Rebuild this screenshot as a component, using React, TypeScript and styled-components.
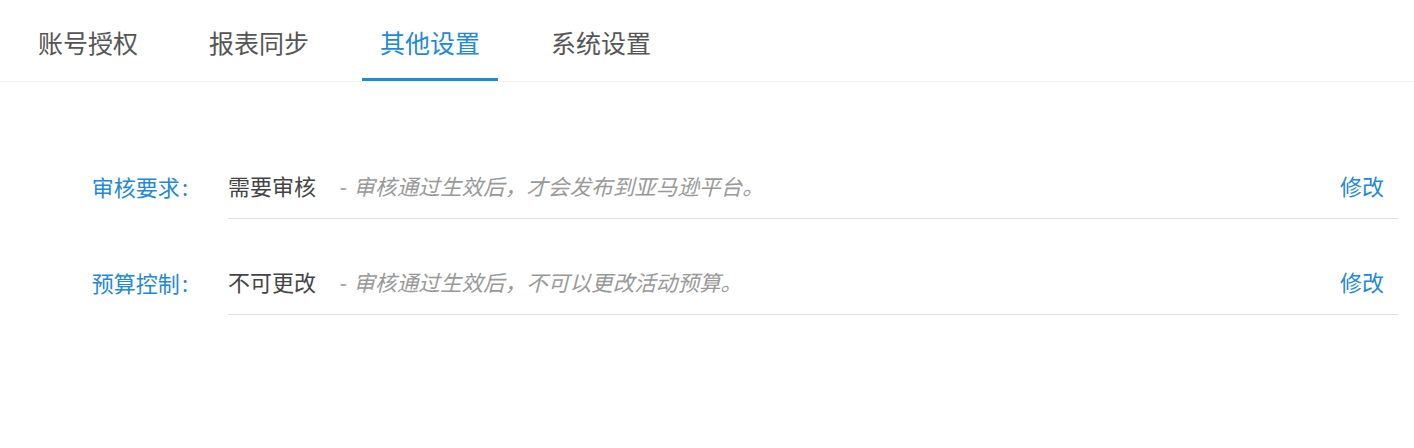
import styled, { createGlobalStyle } from 'styled-components';

const GlobalStyle = createGlobalStyle`
	html, body {
		margin: 0;
		padding: 0;
		background: #fff;
	}
	body {
		font-family: "Noto Sans CJK SC", "Noto Sans", sans-serif;
	}
`;

const Page = styled.div`
	width: 1414px;
	height: 448px;
	background: #fff;
`;

const TabBar = styled.nav`
	display: flex;
	gap: 35px;
	height: 81px;
	padding-left: 20px;
	border-bottom: 1px solid #f2f2f2;
`;

const Tab = styled.div<{ $active?: boolean }>`
	display: flex;
	align-items: center;
	padding: 2px 18px 0;
	font-size: 25px;
	color: ${(p) => (p.$active ? '#2489d3' : '#555')};
	box-shadow: ${(p) => (p.$active ? 'inset 0 -3px 0 #2489d3' : 'none')};
	cursor: pointer;
`;

const Settings = styled.div`
	padding: 41px 16px 0 0;
`;

const Row = styled.div`
	display: grid;
	grid-template-columns: 228px 1fr;
	height: 96px;
`;

const Label = styled.div`
	display: flex;
	align-items: center;
	justify-content: flex-end;
	padding: 48px 40px 18px 0;
	height: 30px;
	font-size: 22px;
	color: #2489d3;
`;

const Colon = styled.span`
	margin-left: 2px;
`;

const Field = styled.div`
	display: flex;
	align-items: center;
	padding: 47px 14px 18px 0;
	height: 30px;
	border-bottom: 1px solid #e1e1e1;
`;

const Value = styled.span`
	font-size: 22px;
	color: #444;
`;

const Hint = styled.span`
	flex: 1;
	margin-left: 22px;
	font-size: 21.6px;
	font-style: italic;
	color: #999;
`;

const Dash = styled.span`
	margin-right: 8px;
`;

const Edit = styled.a`
	font-size: 22px;
	color: #2489d3;
	cursor: pointer;
`;

const tabs = ['账号授权', '报表同步', '其他设置', '系统设置'];

const rows = [
	{ label: '审核要求', value: '需要审核', hint: '审核通过生效后，才会发布到亚马逊平台。' },
	{ label: '预算控制', value: '不可更改', hint: '审核通过生效后，不可以更改活动预算。' },
];

const App = () => {
	return (
		<Page>
			<GlobalStyle />
			<TabBar>
				{tabs.map((t) => (
					<Tab key={t} $active={t === '其他设置'}>
						{t}
					</Tab>
				))}
			</TabBar>
			<Settings>
				{rows.map((r) => (
					<Row key={r.label}>
						<Label>
							{r.label}
							<Colon>:</Colon>
						</Label>
						<Field>
							<Value>{r.value}</Value>
							<Hint>
								<Dash>-</Dash>
								{r.hint}
							</Hint>
							<Edit>修改</Edit>
						</Field>
					</Row>
				))}
			</Settings>
		</Page>
	);
};

export default App;
